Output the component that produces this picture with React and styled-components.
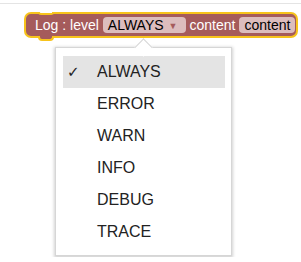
import React from "react";
import styled, { createGlobalStyle } from "styled-components";

const GlobalStyle = createGlobalStyle`
  html, body {
    margin: 0;
    padding: 0;
    background: #ffffff;
    font-family: Arial, "Liberation Sans", sans-serif;
  }
`;

const Workspace = styled.div`
  margin-top: 3px;
  border-top: 1px solid #e4e4e4;
  padding: 8px 0 0 24px;
  height: 254px;
  box-sizing: border-box;
  display: flex;
  flex-direction: column;
  align-items: flex-start;
  overflow: hidden;
`;

const Block = styled.div`
  position: relative;
  display: flex;
  align-items: center;
  gap: 4px;
  height: 22px;
  padding: 0 1px 0 9px;
  background: #a55b5b;
  border: 2px solid #f7c31b;
  border-radius: 7px;
  font-size: 14px;
  color: #ffffff;
  white-space: nowrap;

  &::before {
    content: "";
    position: absolute;
    left: 12px;
    top: -2px;
    width: 12px;
    height: 1px;
    background: #ffffff;
    border: 2px solid #f7c31b;
    border-top: none;
    border-radius: 0 0 4px 4px;
  }

  &::after {
    content: "";
    position: absolute;
    left: 12px;
    bottom: -5px;
    width: 12px;
    height: 3px;
    background: #a55b5b;
    border: 2px solid #f7c31b;
    border-top: none;
    border-radius: 0 0 4px 4px;
  }
`;

const Label = styled.span`
  line-height: 16px;
`;

const Field = styled.span`
  display: inline-flex;
  align-items: center;
  gap: 5px;
  height: 16px;
  padding: 0 ${(p) => (p.$dropdown ? "8px" : "5px")} 0 5px;
  background: #dcbdbd;
  border-radius: 4px;
  color: #000000;
  line-height: 16px;
`;

const Caret = styled.span`
  font-size: 9px;
  color: #a55b5b;
  margin-top: 1px;
`;

const Menu = styled.div`
  position: relative;
  margin: 9px 0 0 31px;
  width: 177px;
  box-sizing: border-box;
  padding: 8px 6px 7px 7px;
  background: #ffffff;
  border: 1px solid #d6d6d6;
  box-shadow: 0 1px 3px 1px rgba(0, 0, 0, 0.18);

  &::before {
    content: "";
    position: absolute;
    left: 81px;
    top: -7px;
    width: 12px;
    height: 12px;
    background: #ffffff;
    border-top: 1px solid #d6d6d6;
    border-left: 1px solid #d6d6d6;
    transform: rotate(45deg);
  }
`;

const Item = styled.div`
  display: flex;
  align-items: center;
  height: 32px;
  font-size: 16px;
  color: #222222;
  background: ${(p) => (p.$selected ? "#e4e4e4" : "transparent")};
`;

const Check = styled.span`
  width: 34px;
  box-sizing: border-box;
  padding-left: 4px;
  font-family: "DejaVu Sans", sans-serif;
  font-size: 15px;
  color: #222222;
`;

const levels = ["ALWAYS", "ERROR", "WARN", "INFO", "DEBUG", "TRACE"];

export default function App() {
  const selected = "ALWAYS";
  return (
    <>
      <GlobalStyle />
      <Workspace>
        <Block>
          <Label>Log : level</Label>
          <Field $dropdown>
            ALWAYS
            <Caret>▼</Caret>
          </Field>
          <Label>content</Label>
          <Field>content</Field>
        </Block>
        <Menu>
          {levels.map((level) => (
            <Item key={level} $selected={level === selected}>
              <Check>{level === selected ? "✓" : ""}</Check>
              {level}
            </Item>
          ))}
        </Menu>
      </Workspace>
    </>
  );
}
